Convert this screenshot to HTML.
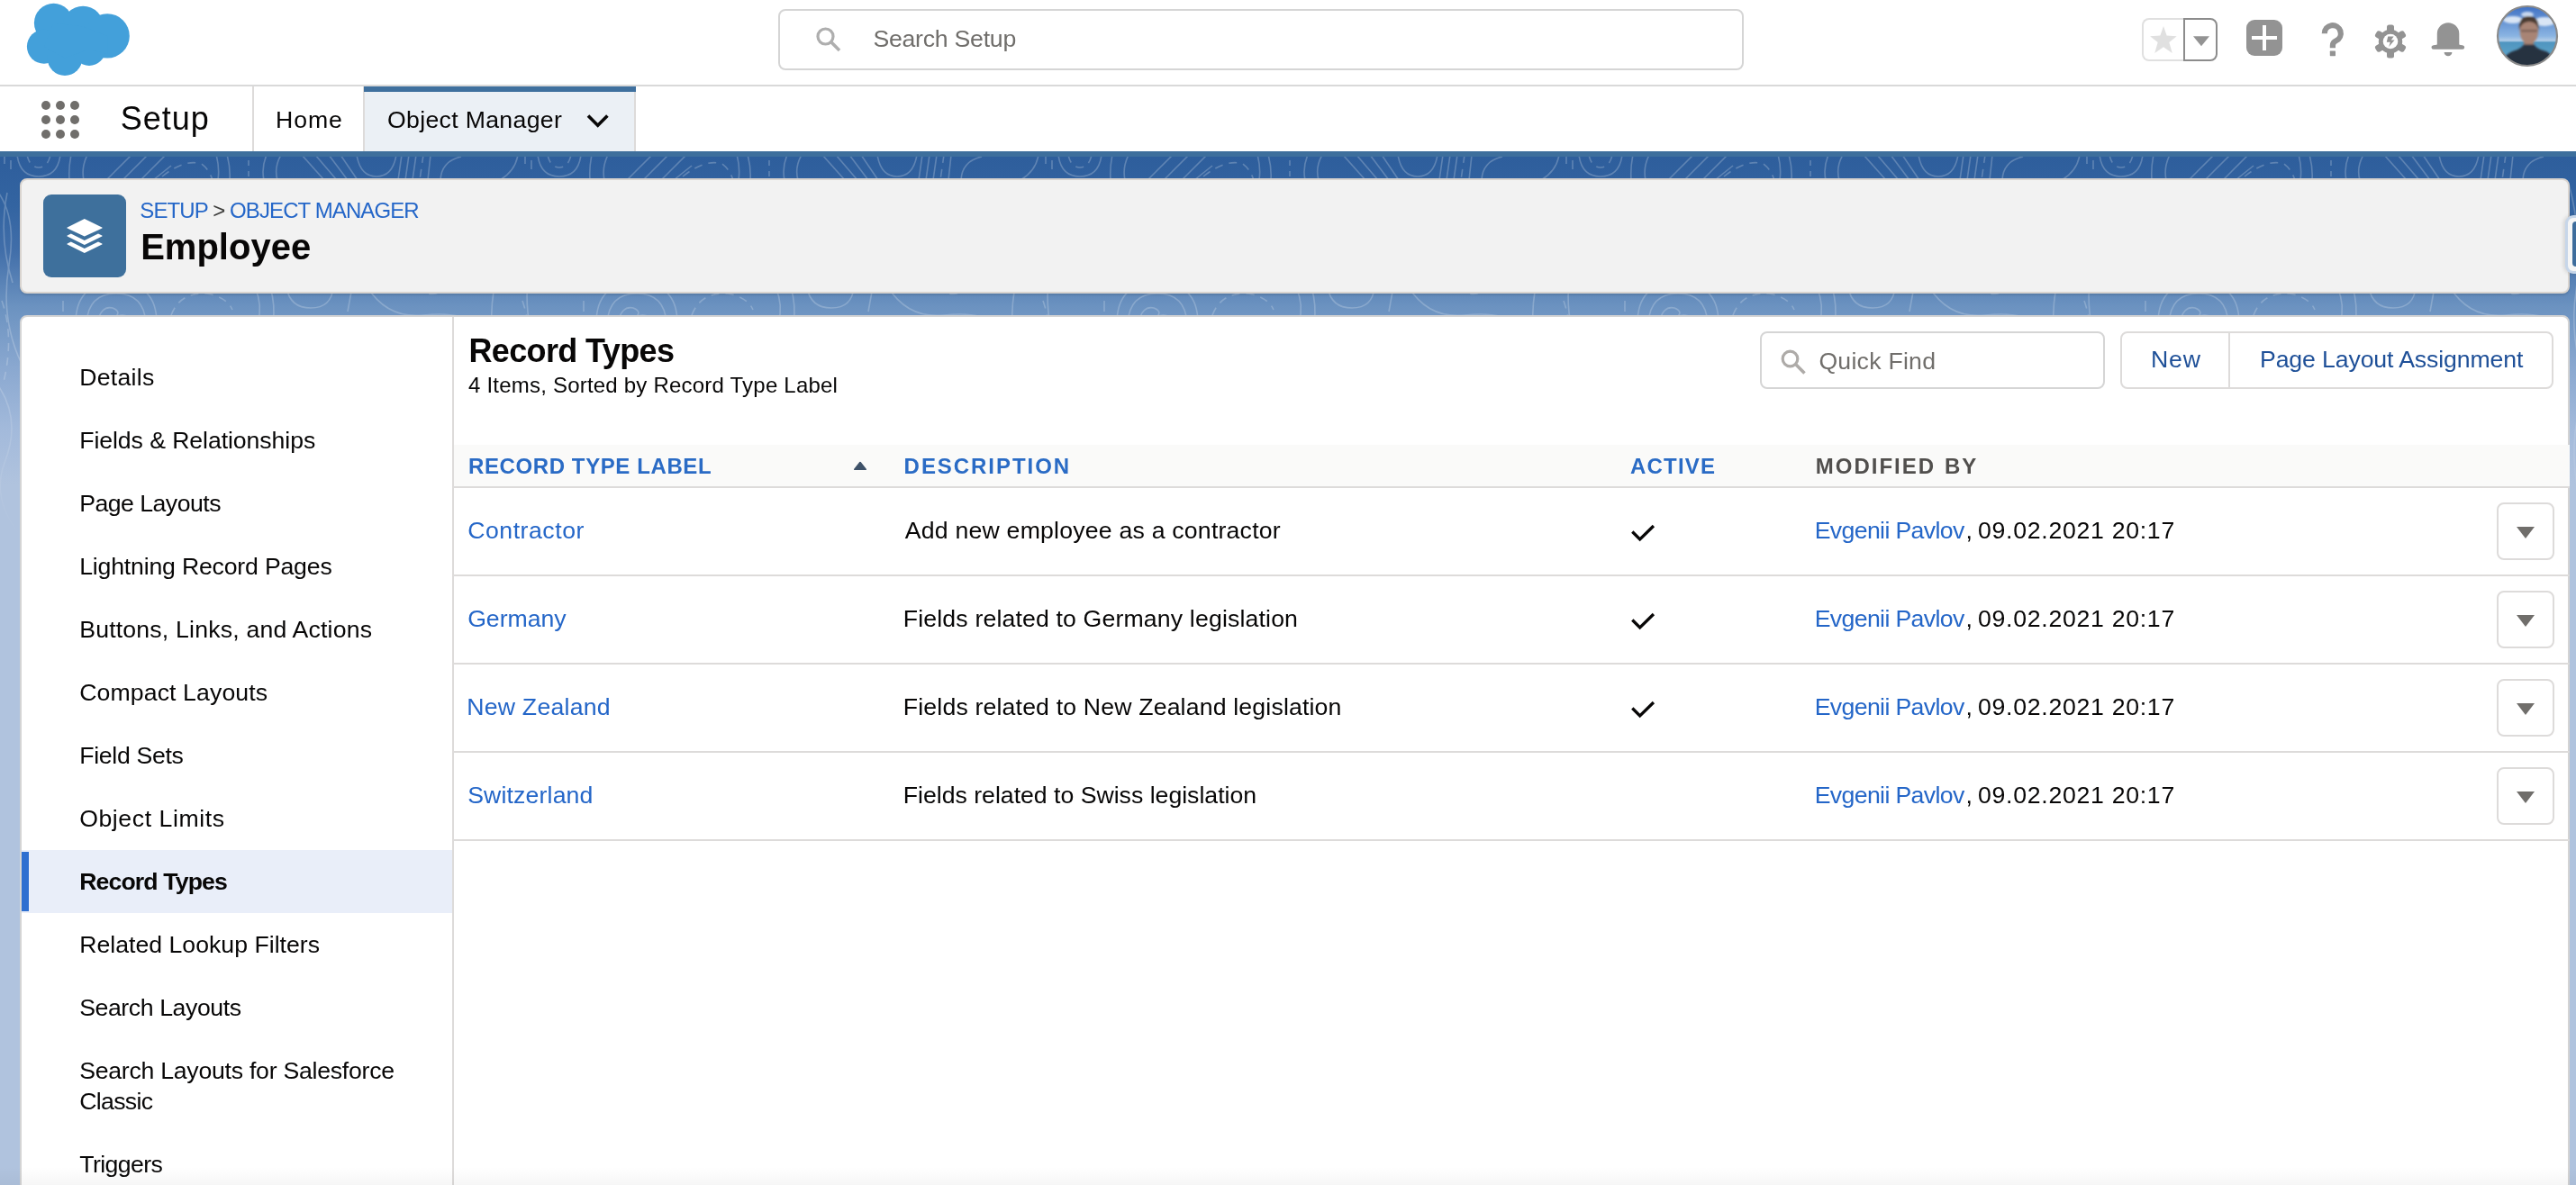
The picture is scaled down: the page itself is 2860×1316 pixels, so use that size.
<!DOCTYPE html>
<html><head><meta charset="utf-8"><style>
html,body{margin:0;padding:0;}
body{width:2860px;height:1316px;overflow:hidden;position:relative;background:#b0c3de;font-family:"Liberation Sans",sans-serif;color:#080707;}
.a{position:absolute;white-space:nowrap;line-height:1;}
body{-webkit-font-smoothing:antialiased;}
#top{position:absolute;left:0;top:0;width:2860px;height:94px;background:#fff;border-bottom:2px solid #d9d9d9;}
#tabs{position:absolute;left:0;top:96px;width:2860px;height:72px;background:#fff;}
#band{position:absolute;left:0;top:168px;width:2860px;height:1148px;
 background:linear-gradient(to bottom,#3e6f9c 0,#3e6f9c 6px,#2e5e9c 6px,#3364a1 60px,#416ea9 110px,#6b92c0 172px,#8aa8d0 240px,#a3badb 310px,#b0c3de 370px,#b0c3de 100%);}
#hdr{position:absolute;left:22px;top:198px;width:2827px;height:124px;background:#f2f2f2;border:2px solid #d9d4cf;border-radius:8px;box-shadow:0 2px 2px rgba(0,0,0,.10);}
#main{position:absolute;left:22px;top:350px;width:2827px;height:1000px;background:#fff;border:2px solid #d4d4d4;border-radius:8px;}
.nav{font-size:26.67px;}
.th{font-size:24px;font-weight:bold;color:#2a6bc5;}
.td{font-size:26.67px;}
.lnk{color:#2466c8;}
.rowline{position:absolute;left:504px;width:2349px;height:2px;background:#dddbda;}
.dd{position:absolute;left:2772.4px;width:59.2px;height:59.2px;border:2px solid #dddbda;border-radius:8px;background:#fff;}
.dd:after{content:"";position:absolute;left:19.3px;top:24.7px;border-left:10.3px solid transparent;border-right:10.3px solid transparent;border-top:13.4px solid #706e6b;}
</style></head><body>
<div id="wrap" style="position:absolute;left:0;top:0;width:2860px;height:1316px;overflow:hidden;will-change:transform;">
<div id="top"></div><div id="tabs"></div><div id="band"></div>
<svg class="a" style="left:0;top:174px" width="2860" height="430" viewBox="0 0 2860 430">
<defs><pattern id="topo" width="578" height="430" patternUnits="userSpaceOnUse"><g fill="none" stroke="#ffffff" stroke-width="1.6" opacity="0.23"><path d="M5 -2 V8"/><path d="M12 4 V14"/><path d="M19 -2 Q22 22 43 22 Q64 22 67 -2"/><path d="M79 -2 Q76 12 77 26"/><path d="M97 -2 Q90 12 93 26"/><path d="M118 26 L146 -2"/><path d="M136 26 L164 -2"/><path d="M156 26 L184 -2"/><path d="M170 26 L190 10"/><path d="M240 -2 Q244 12 242 26"/><path d="M252 -2 Q256 12 255 26"/><path d="M276 4 V10"/><path d="M276 16 V22"/><path d="M296 -2 Q290 12 293 26"/><path d="M312 -2 Q304 12 308 26"/><path d="M335 -2 L360 26"/><path d="M350 -2 L374 26"/><path d="M365 -2 L386 26"/><path d="M378 -2 L397 26"/><path d="M396 -2 Q400 22 418 22 Q436 22 440 -2"/><path d="M446 -2 L442 26"/><path d="M454 -2 L450 26"/><path d="M462 -2 L458 26"/><path d="M478 -2 L475 26"/><path d="M512 0 Q490 5 489 26"/><path d="M575 -2 Q572 16 555 26"/><path d="M70 160 V172"/><path d="M84 185 Q84 140 129 140 Q174 140 174 185"/><path d="M96 185 Q98 152 129 152 Q160 152 162 185"/><path d="M108 185 Q112 165 125 168 Q135 172 128 178 Q140 172 150 185"/><path d="M283 145 Q292 165 286 185"/><path d="M300 145 Q306 165 303 185"/><path d="M318 145 Q322 168 345 168 Q368 168 370 145"/><path d="M390 150 L386 172"/><path d="M408 145 Q430 180 470 176 Q510 172 527 185"/><path d="M579 150 Q586 165 592 185"/><path d="M-10 30 Q20 60 10 120 Q0 180 24 230"/><path d="M-5 250 Q25 290 5 340 Q-10 380 22 420"/><path d="M8 40 Q-2 90 14 140"/><path d="M540 30 Q556 90 548 150 Q540 200 560 260"/><path d="M552 280 Q538 330 556 400"/><path d="M30 -2 Q33 12 43 12 Q53 12 56 -2" stroke-dasharray="9 7"/><path d="M180 22 Q205 2 224 8 Q232 14 236 26" stroke-dasharray="9 7"/><path d="M470 -2 L466 26" stroke-dasharray="9 7"/><path d="M190 176 Q200 150 230 152 Q252 156 258 170" stroke-dasharray="9 7"/><path d="M462 145 Q480 160 497 145" stroke-dasharray="9 7"/><path d="M2 160 Q16 200 4 250" stroke-dasharray="9 7"/></g></pattern>
<linearGradient id="fade" x1="0" y1="0" x2="0" y2="1"><stop offset="0" stop-color="#fff" stop-opacity="1"/><stop offset="0.55" stop-color="#fff" stop-opacity="0.9"/><stop offset="1" stop-color="#fff" stop-opacity="0"/></linearGradient>
<mask id="fm"><rect width="2860" height="430" fill="url(#fade)"/></mask></defs>
<rect width="2860" height="430" fill="url(#topo)" mask="url(#fm)"/></svg>
<div id="hdr"></div><div id="main"></div>
<div class="a" style="left:2848px;top:238.6px;width:20px;height:59px;background:#f5f5f5;border:3px solid rgba(190,208,230,0.85);border-radius:9px;box-shadow:-2px 0 4px rgba(0,0,0,.12);"></div>
<div class="a" style="left:2856px;top:245.5px;width:12px;height:50px;background:#3d6c9c;border-radius:4px;"></div>
<svg class="a" style="left:0;top:0" width="160" height="94" viewBox="0 0 160 94">
<g fill="#43a0da">
<circle cx="59.5" cy="25.4" r="21.6"/><circle cx="92.2" cy="29.6" r="22.8"/><circle cx="119.1" cy="39.9" r="24.7"/>
<circle cx="48.9" cy="51.7" r="19"/><circle cx="72" cy="64.6" r="19.4"/><circle cx="99" cy="54.7" r="18.2"/>
<polygon points="59.5,25.4 92.2,29.6 119.1,39.9 119.1,60 99,54.7 72,64.6 48.9,51.7"/>
</g></svg>
<div class="a" style="left:864px;top:10px;width:1068px;height:64px;border:2px solid #d5d5d5;border-radius:8px;background:#fff;"></div>
<svg class="a" style="left:905px;top:29px" width="30" height="30" viewBox="0 0 30 30"><circle cx="11.5" cy="11.5" r="8.5" fill="none" stroke="#aeaeae" stroke-width="3.2"/><line x1="17.8" y1="17.8" x2="27" y2="27" stroke="#aeaeae" stroke-width="3.6"/></svg>
<div class="a " style="left:969.4px;top:30.16px;font-size:26.67px;color:#706e6b;letter-spacing:-0.245px;">Search Setup</div>

<div class="a" style="left:2378px;top:20px;width:46px;height:44px;border:2px solid #e0e0e0;border-right:none;border-radius:8px 0 0 8px;"></div>
<div class="a" style="left:2424px;top:20px;width:34px;height:44px;border:2px solid #8c8c8c;border-radius:0 8px 8px 0;"></div>
<svg class="a" style="left:2378px;top:20px" width="84" height="48" viewBox="2378 20 84 48">
<polygon points="2402,28.9 2405.6,39.6 2416.7,40.2 2408.3,47 2411.8,58.9 2402,52.2 2392.2,58.9 2395.7,47 2387.1,40.2 2398.4,39.6" fill="#e0e0e0"/>
<polygon points="2435,40.2 2453,40.2 2444,51.2" fill="#939393"/></svg>
<div class="a" style="left:2494px;top:22px;width:40px;height:40px;border-radius:9px;background:#939393;"></div>
<div class="a" style="left:2500px;top:40.2px;width:27.6px;height:4px;background:#fff;"></div>
<div class="a" style="left:2512px;top:28.3px;width:4px;height:27.5px;background:#fff;"></div>
<svg class="a" style="left:2576px;top:24px" width="30" height="42" viewBox="0 0 30 42">
<path d="M4.8 13.3 A9 9 0 1 1 17.6 21.3 Q13.9 23 13.9 26.5 V29.2" fill="none" stroke="#939393" stroke-width="6.2"/>
<rect x="10.8" y="32.6" width="6.2" height="5.6" rx="0.6" fill="#939393"/></svg>
<svg class="a" style="left:2634px;top:26px" width="40" height="40" viewBox="-20 -20 40 40">
<g fill="#939393"><circle r="13.2"/>
<rect x="-4" y="-18.4" width="8" height="36.8" rx="2.5"/>
<rect x="-4" y="-18.4" width="8" height="36.8" rx="2.5" transform="rotate(60)"/>
<rect x="-4" y="-18.4" width="8" height="36.8" rx="2.5" transform="rotate(120)"/></g>
<circle r="8.3" fill="#fff"/>
<polygon points="3.6,-5.6 -2.8,-5.6 -4.2,0.8 -0.2,0.8 -1.8,5.9 4.6,-1.6 0.8,-1.6" fill="#939393"/></svg>
<svg class="a" style="left:2698px;top:24px" width="40" height="40" viewBox="2698 24 40 40">
<path d="M2705.8 49.2 V37.5 A12.25 12.25 0 0 1 2730.3 37.5 V49.2 Q2730.5 49.9 2732 50 Q2736.2 50.3 2736.2 52.6 Q2736.2 54.8 2734 54.8 H2701.8 Q2699.5 54.8 2699.5 52.6 Q2699.5 50.3 2703.5 50 Q2705.8 49.9 2705.8 49.2 Z" fill="#939393"/>
<path d="M2713.6 58 H2722.4 A4.4 4.4 0 0 1 2713.6 58 Z" fill="#939393"/></svg>
<svg class="a" style="left:2770px;top:4px" width="72" height="72" viewBox="0 0 72 72">
<defs><clipPath id="avc"><circle cx="36" cy="36" r="33"/></clipPath>
<linearGradient id="sky" x1="0" y1="0" x2="0" y2="1"><stop offset="0" stop-color="#3a6cc2"/><stop offset="0.5" stop-color="#8ab4e2"/><stop offset="0.57" stop-color="#b2cde8"/><stop offset="0.6" stop-color="#4f95c0"/><stop offset="1" stop-color="#69b0cf"/></linearGradient>
<filter id="bl"><feGaussianBlur stdDeviation="0.9"/></filter></defs>
<g clip-path="url(#avc)"><rect width="72" height="72" fill="url(#sky)"/>
<g filter="url(#bl)">
<ellipse cx="20" cy="18" rx="11" ry="4" fill="#e6eef8" opacity=".9"/>
<ellipse cx="55" cy="20" rx="12" ry="5" fill="#e6eef8" opacity=".9"/>
<ellipse cx="36" cy="12" rx="7" ry="3" fill="#e6eef8" opacity=".8"/>
<rect x="32" y="40" width="11" height="9" fill="#a07e70"/>
<path d="M6 72 Q9 56 21 52.5 Q29 50 32 45.5 L43.5 45.5 Q46 50 55 52.5 Q65 55 68 72 Z" fill="#283041"/>
<ellipse cx="37.9" cy="30.5" rx="10.2" ry="14.5" fill="#a88474"/>
<path d="M27 30 Q25.5 14 37.5 14 Q50 14 48.5 30 Q47 20 38 20 Q29 20 27 30 Z" fill="#4a3a31"/>
<rect x="29" y="29" width="18" height="2.4" fill="#5a4640" opacity=".55"/></g></g>
<circle cx="36" cy="36" r="33" fill="none" stroke="#8a8a8a" stroke-width="2.2"/></svg>
<svg class="a" style="left:40px;top:106px" width="56" height="56" viewBox="40 106 56 56"><g fill="#706e6b"><circle cx="51" cy="117" r="5"/><circle cx="67" cy="117" r="5"/><circle cx="83" cy="117" r="5"/><circle cx="51" cy="133" r="5"/><circle cx="67" cy="133" r="5"/><circle cx="83" cy="133" r="5"/><circle cx="51" cy="149" r="5"/><circle cx="67" cy="149" r="5"/><circle cx="83" cy="149" r="5"/></g></svg>
<div class="a " style="left:133.7px;top:114.42px;font-size:36px;letter-spacing:0.98px;">Setup</div>

<div class="a" style="left:280px;top:96px;width:2px;height:72px;background:#dddbda;"></div>
<div class="a " style="left:306px;top:120.06px;font-size:26.67px;letter-spacing:0.9px;">Home</div>

<div class="a" style="left:403px;top:96px;width:303px;height:72px;background:#ebf0f5;border-left:2px solid #dddbda;border-right:2px solid #dddbda;box-sizing:border-box;"></div>
<div class="a" style="left:404px;top:96px;width:302px;height:6px;background:#3f709e;"></div>
<div class="a " style="left:430px;top:120.06px;font-size:26.67px;letter-spacing:0.32px;">Object Manager</div>

<svg class="a" style="left:648px;top:122px" width="32" height="24" viewBox="648 122 32 24"><polyline points="653,128.5 663.7,139.3 674.4,128.5" fill="none" stroke="#080707" stroke-width="3.6"/></svg>
<div class="a" style="left:48px;top:216px;width:92px;height:92px;border-radius:9px;background:#3e709c;"></div>
<svg class="a" style="left:48px;top:216px" width="92" height="92" viewBox="0 0 92 92"><g fill="#fff">
<path d="M45.8 27 L65.2 36.6 Q66.2 37 65.2 37.6 L45.8 46.6 L26.8 37.6 Q25.8 37 26.8 36.6 Z"/>
<path d="M30.8 43.6 L45.8 51 L61 43.6 L65.2 45.6 Q66.2 46.1 65.2 46.6 L45.8 56 L26.8 46.6 Q25.8 46.1 26.8 45.6 Z"/>
<path d="M30.8 52.5 L45.8 59.9 L61 52.5 L65.2 54.5 Q66.2 55 65.2 55.5 L45.8 64.9 L26.8 55.5 Q25.8 55 26.8 54.5 Z"/></g></svg>
<div class="a " style="left:155.3px;top:222.28px;font-size:24px;letter-spacing:-0.9px;"><span class="lnk">SETUP</span> <span style="color:#3e3e3c">&gt;</span> <span class="lnk">OBJECT MANAGER</span></div>

<div class="a " style="left:156.2px;top:254.0px;font-size:40px;font-weight:bold;">Employee</div>

<div class="a" style="left:502px;top:352px;width:2px;height:964px;background:#dddbda;"></div>
<div class="a" style="left:24px;top:944px;width:478px;height:70px;background:#e9eef9;"></div>
<div class="a" style="left:24px;top:946px;width:8px;height:66px;background:#2e6fd0;"></div>
<div class="a nav" style="left:88.2px;top:406.01px;font-size:26.67px;letter-spacing:0.258px;">Details</div>

<div class="a nav" style="left:88.2px;top:476.01px;font-size:26.67px;letter-spacing:-0.081px;">Fields &amp; Relationships</div>

<div class="a nav" style="left:88.2px;top:546.01px;font-size:26.67px;letter-spacing:-0.518px;">Page Layouts</div>

<div class="a nav" style="left:88.2px;top:616.01px;font-size:26.67px;letter-spacing:-0.19px;">Lightning Record Pages</div>

<div class="a nav" style="left:88.2px;top:686.01px;font-size:26.67px;letter-spacing:0.184px;">Buttons, Links, and Actions</div>

<div class="a nav" style="left:88.2px;top:756.01px;font-size:26.67px;letter-spacing:0.107px;">Compact Layouts</div>

<div class="a nav" style="left:88.2px;top:826.01px;font-size:26.67px;letter-spacing:-0.31px;">Field Sets</div>

<div class="a nav" style="left:88.2px;top:896.01px;font-size:26.67px;letter-spacing:0.564px;">Object Limits</div>

<div class="a nav" style="left:88.2px;top:966.01px;font-size:26.67px;letter-spacing:-0.88px;font-weight:bold;">Record Types</div>

<div class="a nav" style="left:88.2px;top:1036.01px;font-size:26.67px;letter-spacing:0.006px;">Related Lookup Filters</div>

<div class="a nav" style="left:88.2px;top:1106.01px;font-size:26.67px;letter-spacing:-0.415px;">Search Layouts</div>

<div class="a nav" style="left:88.2px;top:1176.01px;font-size:26.67px;letter-spacing:-0.259px;">Search Layouts for Salesforce</div>

<div class="a nav" style="left:88.2px;top:1209.56px;font-size:26.67px;letter-spacing:-0.679px;">Classic</div>

<div class="a nav" style="left:88.2px;top:1280.06px;font-size:26.67px;letter-spacing:-0.578px;">Triggers</div>

<div class="a " style="left:520.4px;top:371.62px;font-size:36px;font-weight:bold;letter-spacing:-0.626px;">Record Types</div>

<div class="a " style="left:520px;top:416.08px;font-size:24px;letter-spacing:0.213px;">4 Items, Sorted by Record Type Label</div>

<div class="a" style="left:1954px;top:368px;width:379px;height:60px;border:2px solid #d5d5d5;border-radius:8px;background:#fff;"></div>
<svg class="a" style="left:1976px;top:387px" width="30" height="30" viewBox="0 0 30 30"><circle cx="11.5" cy="11.5" r="8.3" fill="none" stroke="#aeaba8" stroke-width="3.2"/><line x1="17.6" y1="17.6" x2="27.5" y2="27.5" stroke="#aeaba8" stroke-width="3.6"/></svg>
<div class="a " style="left:2019.4px;top:388.26px;font-size:26.67px;color:#706e6b;letter-spacing:0.247px;">Quick Find</div>

<div class="a" style="left:2354px;top:368px;width:477px;height:60px;border:2px solid #dddbda;border-radius:8px;background:#fff;"></div>
<div class="a" style="left:2473.6px;top:370px;width:2px;height:60px;background:#dddbda;"></div>
<div class="a " style="left:2388px;top:386.46px;font-size:26.67px;color:#1f5098;letter-spacing:0.862px;">New</div>

<div class="a " style="left:2509px;top:386.46px;font-size:26.67px;color:#1f5098;letter-spacing:-0.122px;">Page Layout Assignment</div>

<div class="a" style="left:504px;top:494px;width:2349px;height:46px;background:#fafaf9;"></div>
<div class="rowline" style="top:540px;"></div>
<div class="a th" style="left:520px;top:506.48px;font-size:24px;letter-spacing:0.6px;">RECORD TYPE LABEL</div>

<svg class="a" style="left:946px;top:510px" width="18" height="14" viewBox="0 0 18 14"><path d="M2.9 11.2 L9 3.6 L15.1 11.2 Z" fill="#3e5269" stroke="#3e5269" stroke-width="1.8" stroke-linejoin="round"/></svg>
<div class="a th" style="left:1003.6px;top:506.48px;font-size:24px;letter-spacing:1.95px;">DESCRIPTION</div>

<div class="a th" style="left:1810px;top:506.48px;font-size:24px;letter-spacing:1.2px;">ACTIVE</div>

<div class="a th" style="left:2015.8px;top:506.48px;font-size:24px;letter-spacing:2px;word-spacing:1.2px;color:#514f4d;">MODIFIED BY</div>

<div class="a lnk" style="left:519.2px;top:576.01px;font-size:26.67px;letter-spacing:0.526px;">Contractor</div>

<div class="a " style="left:1004.8px;top:576.01px;font-size:26.67px;letter-spacing:0.208px;">Add new employee as a contractor</div>

<svg class="a" style="left:1808px;top:581.0px" width="32" height="24" viewBox="0 0 32 24"><polyline points="4.3,9.5 12.7,18 27.9,3" fill="none" stroke="#080707" stroke-width="3.3"/></svg>
<div class="a lnk" style="left:2014.7px;top:576.01px;font-size:26.67px;letter-spacing:-0.632px;">Evgenii Pavlov</div>

<div class="a " style="left:2182.5px;top:576.01px;font-size:26.67px;">,</div>

<div class="a " style="left:2196px;top:576.01px;font-size:26.67px;letter-spacing:0.713px;">09.02.2021 20:17</div>

<div class="dd" style="top:558.4px;"></div>
<div class="rowline" style="top:638px;"></div>
<div class="a lnk" style="left:519.2px;top:674.01px;font-size:26.67px;letter-spacing:-0.048px;">Germany</div>

<div class="a " style="left:1002.8px;top:674.01px;font-size:26.67px;letter-spacing:0.153px;">Fields related to Germany legislation</div>

<svg class="a" style="left:1808px;top:679.0px" width="32" height="24" viewBox="0 0 32 24"><polyline points="4.3,9.5 12.7,18 27.9,3" fill="none" stroke="#080707" stroke-width="3.3"/></svg>
<div class="a lnk" style="left:2014.7px;top:674.01px;font-size:26.67px;letter-spacing:-0.632px;">Evgenii Pavlov</div>

<div class="a " style="left:2182.5px;top:674.01px;font-size:26.67px;">,</div>

<div class="a " style="left:2196px;top:674.01px;font-size:26.67px;letter-spacing:0.713px;">09.02.2021 20:17</div>

<div class="dd" style="top:656.4px;"></div>
<div class="rowline" style="top:736px;"></div>
<div class="a lnk" style="left:518.2px;top:772.01px;font-size:26.67px;letter-spacing:0.236px;">New Zealand</div>

<div class="a " style="left:1002.8px;top:772.01px;font-size:26.67px;letter-spacing:0.164px;">Fields related to New Zealand legislation</div>

<svg class="a" style="left:1808px;top:777.0px" width="32" height="24" viewBox="0 0 32 24"><polyline points="4.3,9.5 12.7,18 27.9,3" fill="none" stroke="#080707" stroke-width="3.3"/></svg>
<div class="a lnk" style="left:2014.7px;top:772.01px;font-size:26.67px;letter-spacing:-0.632px;">Evgenii Pavlov</div>

<div class="a " style="left:2182.5px;top:772.01px;font-size:26.67px;">,</div>

<div class="a " style="left:2196px;top:772.01px;font-size:26.67px;letter-spacing:0.713px;">09.02.2021 20:17</div>

<div class="dd" style="top:754.4px;"></div>
<div class="rowline" style="top:834px;"></div>
<div class="a lnk" style="left:519.2px;top:870.01px;font-size:26.67px;letter-spacing:0.144px;">Switzerland</div>

<div class="a " style="left:1002.8px;top:870.01px;font-size:26.67px;letter-spacing:-0.009px;">Fields related to Swiss legislation</div>

<div class="a lnk" style="left:2014.7px;top:870.01px;font-size:26.67px;letter-spacing:-0.632px;">Evgenii Pavlov</div>

<div class="a " style="left:2182.5px;top:870.01px;font-size:26.67px;">,</div>

<div class="a " style="left:2196px;top:870.01px;font-size:26.67px;letter-spacing:0.713px;">09.02.2021 20:17</div>

<div class="dd" style="top:852.4px;"></div>
<div class="rowline" style="top:932px;"></div>
<div class="a" style="left:0;top:1296px;width:2860px;height:20px;background:linear-gradient(to bottom,rgba(0,0,0,0),rgba(0,0,0,0.035));"></div>
</div></body></html>
